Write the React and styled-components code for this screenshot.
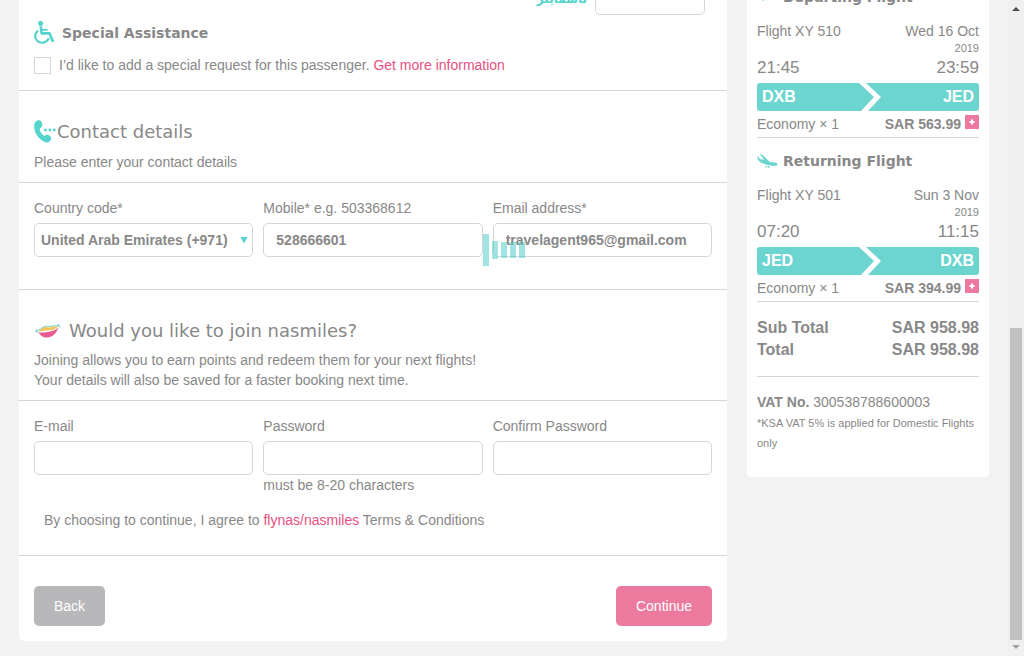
import React from 'react';
import styled, { createGlobalStyle } from 'styled-components';

const teal = '#55d4ce';
const line = '#d6d6d6';
const ink = '#888888';
const pink = '#ec7a9f';

const GlobalStyle = createGlobalStyle`
  * { box-sizing: border-box; }
  body {
    margin: 0;
    background: #f3f3f3;
    color: ${ink};
    font: 14px/20px "Liberation Sans", Arial, sans-serif;
  }
  p, h2, h3 { margin: 0; }
`;

const Window = styled.div`
  display: grid;
  grid-template-columns: minmax(0, 1fr) 16px;
  min-height: 100vh;
  overflow: hidden;
`;

const Content = styled.div`
  position: relative;
  display: grid;
  grid-template-columns: minmax(0, 1fr) 242px;
  gap: 20px;
  align-items: start;
  margin-top: -20px;
  padding: 0 19px 15px;
`;

const Card = styled.main`
  background: #fff;
  border-radius: 5px;
`;

const Section = styled.section`
  padding: ${(p) => p.$pad};
  border-bottom: ${(p) => (p.$last ? '0' : `1px solid ${line}`)};
`;

const CardRow = styled.div`
  display: flex;
  align-items: flex-start;
  justify-content: flex-end;
  gap: 8px;
  padding-right: 7px;
  margin-bottom: 6px;
`;

const MemberLabel = styled.label`
  color: ${teal};
  font: bold 12px/20px "DejaVu Sans", sans-serif;
  padding-top: 8px;
`;

const TextInput = styled.input`
  display: block;
  width: ${(p) => p.$width || '100%'};
  height: 34px;
  padding: 0 12px;
  border: 1px solid ${line};
  border-radius: 5px;
  background: #fff;
  color: ${ink};
  font: bold 14px "Liberation Sans", Arial, sans-serif;
  outline: none;
`;

const Heading = styled.h2`
  display: flex;
  align-items: center;
  gap: ${(p) => p.$gap || '0'};
  font: 18px/26px "DejaVu Sans", Verdana, sans-serif;
  margin-bottom: ${(p) => p.$below || '6px'};
`;

const SmallHeading = styled.h3`
  display: flex;
  align-items: center;
  gap: ${(p) => p.$gap};
  font: bold 14px/${(p) => p.$line} "DejaVu Sans", Verdana, sans-serif;
  margin-bottom: ${(p) => p.$below};
`;

const CheckRow = styled.div`
  display: flex;
  align-items: center;
  gap: 8px;
`;

const Checkbox = styled.input`
  appearance: none;
  width: 17px;
  height: 17px;
  margin: 0;
  border: 1px solid ${line};
  background: #fff;
`;

const Link = styled.a`
  color: #e8507f;
  text-decoration: none;
`;

const Fields = styled.div`
  display: grid;
  grid-template-columns: repeat(3, minmax(0, 1fr));
  gap: 10px;
`;

const FieldLabel = styled.label`
  display: block;
  margin-bottom: 5px;
`;

const SelectBox = styled.div`
  position: relative;
  svg {
    position: absolute;
    right: 5px;
    top: 14px;
    pointer-events: none;
  }
`;

const Select = styled.select`
  appearance: none;
  display: block;
  width: 100%;
  height: 34px;
  padding: 0 16px 0 6px;
  border: 1px solid ${line};
  border-radius: 5px;
  background: #fff;
  color: ${ink};
  font: bold 14px "Liberation Sans", Arial, sans-serif;
`;

const Agreement = styled.p`
  padding: 15px 10px 0;
`;

const Actions = styled.div`
  display: flex;
  justify-content: space-between;
`;

const Button = styled.button`
  height: 40px;
  padding: 0 20px;
  border: 0;
  border-radius: 5px;
  background: ${(p) => (p.$primary ? pink : '#b8b8ba')};
  color: #fff;
  font: 14px "Liberation Sans", Arial, sans-serif;
`;

const Summary = styled.aside`
  padding: 7px 10px 24px;
  background: #fff;
  border-radius: 0 0 4px 4px;
`;

const Flight = styled.section`
  padding-bottom: 3px;
  margin-bottom: 13px;
  border-bottom: 1px solid ${line};
`;

const Split = styled.div`
  display: flex;
  justify-content: space-between;
`;

const FlightDate = styled.div`
  text-align: right;
`;

const Year = styled.div`
  font-size: 11px;
  line-height: 14px;
`;

const Times = styled(Split)`
  font-size: 17px;
  line-height: 26px;
  margin-bottom: 2px;
`;

const Route = styled.div`
  display: grid;
  grid-template-columns: 1fr 26px 1fr;
  height: 28px;
  padding: 0 5px;
  margin-bottom: 3px;
  border-radius: 3px;
  background: #6dd5d0;
  color: #fff;
  font-weight: bold;
  font-size: 16px;
  line-height: 27px;
`;

const Arrival = styled.span`
  text-align: right;
`;

const Price = styled.div`
  display: flex;
  align-items: flex-start;
  gap: 4px;
  font-weight: bold;
`;

const Expand = styled.button`
  display: flex;
  align-items: center;
  justify-content: center;
  width: 14px;
  height: 14px;
  margin-top: 1px;
  padding: 0;
  border: 0;
  background: ${pink};
`;

const Totals = styled.div`
  padding: 2px 0 15px;
  margin-bottom: 15px;
  border-bottom: 1px solid ${line};
  font-weight: bold;
  font-size: 16px;
  line-height: 22px;
`;

const Note = styled.p`
  font-size: 11px;
  line-height: 20px;
`;

const Vat = styled.p`
  margin-bottom: 1px;
`;

const Loader = styled.div`
  position: absolute;
  inset: 254px 0 auto;
  display: flex;
  align-items: center;
  justify-content: center;
  gap: 3px;
  height: 32px;
  pointer-events: none;
`;

const Bar = styled.span`
  width: 6px;
  height: ${(p) => p.$height}px;
  background: rgba(69, 201, 195, 0.5);
`;

const Scrollbar = styled.div`
  display: flex;
  flex-direction: column;
  background: #f0f0f0;
  svg { flex: none; }
`;

const Space = styled.div`
  flex: 1;
`;

const Thumb = styled.div`
  flex: 1;
  margin: 0 2px;
  background: #c1c1c1;
`;

const WheelchairIcon = () => (
  <svg width="22" height="24" viewBox="0 0 22 24" fill="none" stroke={teal} strokeWidth="2" aria-hidden="true">
    <circle cx="6.6" cy="2.4" r="2.5" fill={teal} stroke="none" />
    <path d="M6.7 5.4L7.6 12.4H15.6L18.9 20.4" strokeWidth="2.6" strokeLinejoin="round" />
    <path d="M7.2 8.8H13.6" strokeWidth="1.8" />
    <path d="M4.2 9.6A7 6.6 0 1 0 14.8 17.2" strokeWidth="2.2" />
    <path d="M17.6 20.6L20.2 19.6" strokeWidth="1.6" />
  </svg>
);

const PhoneIcon = () => (
  <svg width="23" height="24" viewBox="0 0 23 24" fill={teal} aria-hidden="true">
    <path d="M4.2.2C6.6-.1 8.3 2 8.4 4.6C8.4 6.2 7.8 7.3 6.4 8.1C5.7 8.5 5.6 9.4 5.9 10.3C6.5 12.6 8 14.3 9.8 15.4C10.4 15.8 11 15.7 11.6 15.3C12.8 14.5 14.4 14.8 15.7 15.8C17.4 17.1 17.5 18.8 16.5 20.4C15 22.9 11.6 23.1 8.5 20.8C3.7 17.4.5 12.6.2 7.4C0 3.8 1.3.6 4.2.2Z" />
    <circle cx="11.3" cy="10" r="1.4" />
    <circle cx="15.8" cy="10" r="1.4" />
    <circle cx="20.3" cy="10" r="1.4" />
  </svg>
);

const SmileIcon = () => (
  <svg width="27" height="18" viewBox="0 0 27 18" fill="none" aria-hidden="true">
    <path d="M3.2 9C7.5 7.6 8.6 4.9 11.6 5C13.2 5 14 6 15.4 5.4C18 4 20.5 5 24 4.2C21.4 7.6 18 8.3 14.8 8.3C10.6 8.4 8.4 9.9 3.2 9Z" fill="#f8c456" />
    <path d="M4.2 10.2C8 10.9 10.5 10.2 13.2 9.9C17.2 9.7 21.1 8.9 24.2 5.6C22.4 11.8 18.2 15.6 13 15.6C8.8 15.6 6.2 13.2 4.2 10.2Z" fill="#e85b94" />
    <path d="M1.2 9.6C6.5 8.6 8.2 4.4 11.6 4.2C13.1 4.2 13.8 5 15.1 4.5C18.3 3 20.8 4.6 25.9 3.2M1.9 7L3.8 11M23.8 2L25.8 5.6" stroke="#62cfca" strokeWidth=".9" />
  </svg>
);

const PlaneIcon = ({ takeOff }) => (
  <svg width="22" height="14" viewBox="0 0 22 14" fill="#6dd5d0" aria-hidden="true">
    {takeOff ? (
      <path d="M0 7L4 8L9 5L3 1L6 0L13 3L18 1C20 0 21 1 20 2L9 8L6.5 11L4 9Z" />
    ) : (
      <>
        <path d="M0 .9C1 1.2 1.8 2.5 2.8 3.9L7.2 4.9L2.8 -.9C4.2 -1 5.4 -.2 6.3 .8L13 7L17.6 7.6C19.6 8 20.8 8.8 20.7 9.7C20.4 10.7 18.6 10.8 16.4 10.7C11.6 10.5 5.3 9.2 2 6C1 5 .4 3 0 .9Z" transform="translate(0 1)" />
        <circle cx="9.3" cy="12.6" r=".9" />
        <circle cx="11.7" cy="12.9" r=".9" />
      </>
    )}
  </svg>
);

function Field({ id, label, hint, children, ...input }) {
  return (
    <div>
      <FieldLabel htmlFor={id}>{label}</FieldLabel>
      {children || <TextInput id={id} {...input} />}
      {hint && <p>{hint}</p>}
    </div>
  );
}

function FlightCard({ title, takeOff, number, date, departs, arrives, from, to, price }) {
  return (
    <Flight>
      <SmallHeading $gap="4px" $line="20px" $below="14px">
        <PlaneIcon takeOff={takeOff} />
        {title}
      </SmallHeading>
      <Split>
        <span>{number}</span>
        <FlightDate>
          {date}
          <Year>2019</Year>
        </FlightDate>
      </Split>
      <Times>
        <span>{departs}</span>
        <span>{arrives}</span>
      </Times>
      <Route>
        <span>{from}</span>
        <svg width="26" height="28" viewBox="0 0 26 28" fill="#fff" aria-hidden="true">
          <path d="M4 0H11L26 14L13 28H6L19 14Z" />
        </svg>
        <Arrival>{to}</Arrival>
      </Route>
      <Split>
        <span>Economy × 1</span>
        <Price>
          {price}
          <Expand type="button" aria-label="Show fare details">
            <svg width="6" height="6" viewBox="0 0 6 6" stroke="#fff" strokeWidth="2" aria-hidden="true">
              <path d="M3 .5V5.5M.5 3H5.5" />
            </svg>
          </Expand>
        </Price>
      </Split>
    </Flight>
  );
}

export default function App() {
  return (
    <>
      <GlobalStyle />
      <Window>
        <Content>
          <Card>
            <Section $pad="1px 15px 15px">
              <CardRow>
                <MemberLabel htmlFor="member" lang="ar">ناسمايلز</MemberLabel>
                <TextInput id="member" $width="110px" />
              </CardRow>
              <SmallHeading $gap="6px" $line="24px" $below="10px">
                <WheelchairIcon />
                Special Assistance
              </SmallHeading>
              <CheckRow>
                <Checkbox type="checkbox" id="request" />
                <span>
                  <label htmlFor="request">I’d like to add a special request for this passenger.</label>{' '}
                  <Link href="#assistance">Get more information</Link>
                </span>
              </CheckRow>
            </Section>

            <Section $pad="28px 15px 10px">
              <Heading $below="7px">
                <PhoneIcon />
                Contact details
              </Heading>
              <p>Please enter your contact details</p>
            </Section>

            <Section $pad="15px 15px 32px">
              <Fields>
                <Field id="country" label="Country code*">
                  <SelectBox>
                    <Select id="country" defaultValue="971">
                      <option value="971">United Arab Emirates (+971)</option>
                    </Select>
                    <svg width="8" height="7" viewBox="0 0 8 7" fill={teal} aria-hidden="true">
                      <path d="M.5 0H7.5L4 6.5Z" />
                    </svg>
                  </SelectBox>
                </Field>
                <Field id="mobile" label="Mobile* e.g. 503368612" type="tel" defaultValue="528666601" />
                <Field id="contact-email" label="Email address*" type="email" defaultValue="travelagent965@gmail.com" />
              </Fields>
            </Section>

            <Section $pad="28px 15px 10px">
              <Heading $gap="8px">
                <SmileIcon />
                Would you like to join nasmiles?
              </Heading>
              <p>Joining allows you to earn points and redeem them for your next flights!</p>
              <p>Your details will also be saved for a faster booking next time.</p>
            </Section>

            <Section $pad="15px 15px 25px">
              <Fields>
                <Field id="email" label="E-mail" type="email" />
                <Field id="password" label="Password" type="password" hint="must be 8-20 characters" />
                <Field id="confirm" label="Confirm Password" type="password" />
              </Fields>
              <Agreement>
                By choosing to continue, I agree to <Link href="#nasmiles">flynas/nasmiles</Link> Terms &amp; Conditions
              </Agreement>
            </Section>

            <Section $pad="30px 15px 15px" $last>
              <Actions>
                <Button type="button">Back</Button>
                <Button type="button" $primary>Continue</Button>
              </Actions>
            </Section>
          </Card>

          <Summary>
            <FlightCard
              title="Departing Flight"
              takeOff
              number="Flight XY 510"
              date="Wed 16 Oct"
              departs="21:45"
              arrives="23:59"
              from="DXB"
              to="JED"
              price="SAR 563.99"
            />
            <FlightCard
              title="Returning Flight"
              number="Flight XY 501"
              date="Sun 3 Nov"
              departs="07:20"
              arrives="11:15"
              from="JED"
              to="DXB"
              price="SAR 394.99"
            />
            <Totals>
              <Split>
                <span>Sub Total</span>
                <span>SAR 958.98</span>
              </Split>
              <Split>
                <span>Total</span>
                <span>SAR 958.98</span>
              </Split>
            </Totals>
            <Vat>
              <strong>VAT No.</strong> 300538788600003
            </Vat>
            <Note>*KSA VAT 5% is applied for Domestic Flights only</Note>
          </Summary>

          <Loader>
            <Bar $height={32} />
            <Bar $height={18} />
            <Bar $height={16} />
            <Bar $height={16} />
            <Bar $height={16} />
          </Loader>
        </Content>

        <Scrollbar aria-hidden="true">
          <svg width="16" height="16" viewBox="0 0 16 16" fill="#505050">
            <path d="M4 11L8 7L12 11Z" />
          </svg>
          <Space />
          <Thumb />
          <svg width="16" height="16" viewBox="0 0 16 16" fill="#a3a3a3">
            <path d="M4 5H12L8 9Z" />
          </svg>
        </Scrollbar>
      </Window>
    </>
  );
}
